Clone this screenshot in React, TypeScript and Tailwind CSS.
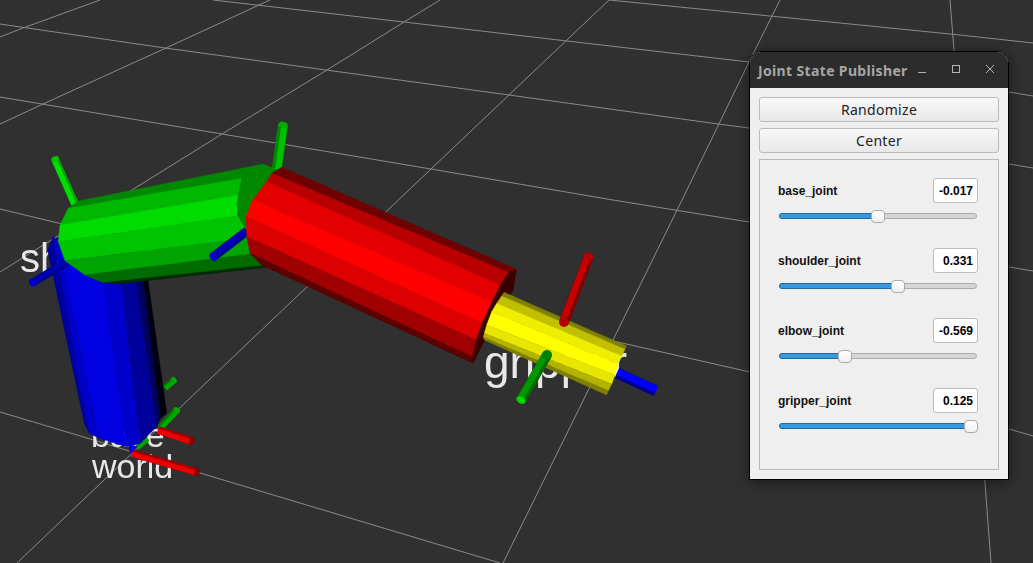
const gridLines = [
  "213,0 404,22 567,41 749,62 1009,92 1033,96",
  "609,0 750,14 960,35 1033,43",
  "0,24 165,48 326,70 509,95 718,124 749,128 1009,164 1033,168",
  "0,97 222,134 431,169 613,200 749,222 1009,267 1033,271",
  "0,209 58,223 260,265 622,343 750,372 1009,429 1033,436",
  "0,412 87,438 200,473 500,563",
  "0,37 23,28 100,0",
  "0,124 43,104 166,48 259,5 270,0",
  "0,272 222,134 327,70 404,22 440,0",
  "609,0 431,169 230,360 17,563",
  "780,0 749,62 682,200 613,340 503,563",
  "950,0 954,50 985,483 991,563",
];

type Pt = [number, number];
type Edge = [number, number, number, number];

const z3 = (x: number, y: number): Pt => [x / 3, y / 3 + 140];
const z4 = (x: number, y: number): Pt => [x / 3 + 30, y / 3 + 330];
const z5 = (x: number, y: number): Pt => [x / 3 + 450, y / 3 + 240];
const z6 = (x: number, y: number): Pt => [x / 3 + 230, y / 3 + 110];
const z12 = (x: number, y: number): Pt => [x / 3 + 40, y / 3 + 270];

const pts = (list: Pt[]) => list.map((p) => `${p[0].toFixed(1)},${p[1].toFixed(1)}`).join(" ");

function Bands({ edges, colors, map }: { edges: Edge[]; colors: string[]; map: (x: number, y: number) => Pt }) {
  return (
    <g>
      {colors.map((c, i) => {
        const a = edges[i];
        const b = edges[i + 1];
        return (
          <polygon
            key={i}
            fill={c}
            stroke={c}
            strokeWidth={0.4}
            points={pts([map(a[0], a[1]), map(a[2], a[3]), map(b[2], b[3]), map(b[0], b[1])])}
          />
        );
      })}
    </g>
  );
}

function Tube({
  from,
  to,
  w,
  dark,
  bright,
  cap,
  side = 1,
  square = false,
}: {
  from: Pt;
  to: Pt;
  w: number;
  dark: string;
  bright: string;
  cap?: string;
  side?: number;
  square?: boolean;
}) {
  const dx = to[0] - from[0];
  const dy = to[1] - from[1];
  const len = Math.hypot(dx, dy);
  const nx = (-dy / len) * side * w * 0.14;
  const ny = (dx / len) * side * w * 0.14;
  return (
    <g>
      <line x1={from[0]} y1={from[1]} x2={to[0]} y2={to[1]} stroke={dark} strokeWidth={w} />
      <line x1={from[0] + nx} y1={from[1] + ny} x2={to[0] + nx} y2={to[1] + ny} stroke={bright} strokeWidth={w * 0.62} />
      {!square && (
        <ellipse
          cx={to[0]}
          cy={to[1]}
          rx={w / 2}
          ry={w / 3}
          fill={cap ?? bright}
          transform={`rotate(${(Math.atan2(dy, dx) * 180) / Math.PI + 90} ${to[0]} ${to[1]})`}
        />
      )}
    </g>
  );
}

function Scene() {
  return (
    <svg className="absolute inset-0" width={1033} height={563} viewBox="0 0 1033 563">
      {gridLines.map((l, i) => (
        <polyline key={i} points={l} fill="none" stroke="#8a8a8a" strokeWidth={1} />
      ))}

      <g fill="#e8e8e8" fontFamily="'Liberation Sans', sans-serif" className="blur-[0.4px]">
        <text x={20} y={272} fontSize={40}>shoulder</text>
        <text x={91} y={447} fontSize={34}>base</text>
        <text x={92} y={478} fontSize={34}>world</text>
        <text x={484} y={378} fontSize={46}>gripper</text>
      </g>

      {/* base frame axes */}
      <Tube from={[165, 388]} to={[174, 380]} w={7} dark="#007a00" bright="#00a800" />
      <Tube from={[160, 428]} to={[177, 410]} w={7} dark="#007a00" bright="#00a800" />
      <Tube from={[137, 448]} to={[147, 440]} w={5} dark="#007a00" bright="#00a800" />
      <Tube from={[158, 430]} to={[192, 441]} w={8} dark="#a00000" bright="#ee0000" cap="#880000" />
      <Tube from={[132, 453]} to={[197, 472]} w={8} dark="#a00000" bright="#ee0000" cap="#880000" />
      <polygon points={pts([z4(295, 340), z4(322, 350), z4(300, 372)])} fill="#0000e0" />

      {/* base link */}
      <polygon points={pts([z3(175, 290), z3(145, 330), z3(150, 360), z3(200, 360)])} fill="#00009c" />
      <Bands
        map={z12}
        edges={[
          [23, -60, 133, 460],
          [39, -100, 148, 490],
          [55, -90, 178, 505],
          [171, -90, 260, 530],
          [230, -90, 300, 520],
          [272, -90, 350, 470],
          [295, -90, 362, 445],
          [307, -90, 380, 430],
        ]}
        colors={["#00009c", "#0000c8", "#0000e0", "#0000cc", "#00009a", "#000060", "#000010"]}
      />
      <Tube from={[67, 262]} to={[32, 283]} w={8} dark="#000090" bright="#0000b4" cap="#0000c8" />

      {/* shoulder axis */}
      <Tube from={[75, 204]} to={[55, 159]} w={8} dark="#00a800" bright="#00e000" cap="#00c800" side={-1} />
      <Tube from={[276, 175]} to={[283, 125]} w={10} dark="#008a00" bright="#00c000" cap="#00a800" side={1} />

      {/* shoulder link */}
      <polygon
        fill="#008800"
        points={pts([z3(725, 115), z3(790, 72), z3(880, 110), z3(820, 380), z3(780, 375), z3(735, 265), z3(718, 235), z3(710, 190)])}
      />
      <Bands
        map={z3}
        edges={[
          [235, 183, 790, 72],
          [205, 205, 725, 115],
          [180, 255, 715, 165],
          [175, 305, 712, 228],
          [195, 362, 800, 288],
          [255, 405, 810, 335],
          [310, 428, 800, 375],
          [360, 431, 800, 382],
        ]}
        colors={["#008800", "#00b800", "#00dc00", "#00c400", "#00a400", "#006c00", "#002c00"]}
      />
      <polygon fill="#008800" points={pts([z3(725, 115), z3(790, 72), z3(880, 110), z3(800, 300), z3(735, 265), z3(718, 235), z3(710, 190)])} />
      <Tube from={[247, 231]} to={[213, 257]} w={9} dark="#000090" bright="#0000b8" cap="#0000d0" />

      {/* elbow link */}
      <polygon
        fill="#3a0000"
        points={pts([z6(860, 478), z6(850, 540), z6(800, 620), z6(760, 700), z6(730, 760), z6(600, 700), z6(760, 480)])}
      />
      <Bands
        map={z6}
        edges={[
          [155, 172, 860, 478],
          [125, 190, 835, 487],
          [110, 215, 810, 525],
          [68, 270, 785, 575],
          [48, 320, 755, 640],
          [50, 380, 738, 690],
          [60, 430, 725, 740],
          [95, 465, 730, 760],
        ]}
        colors={["#700000", "#b80000", "#e40000", "#ff0000", "#dc0000", "#a00000", "#5c0000"]}
      />

      {/* gripper link */}
      <Bands
        map={z5}
        edges={[
          [162, 157, 530, 318],
          [155, 168, 525, 328],
          [140, 190, 515, 348],
          [125, 215, 503, 372],
          [110, 255, 495, 405],
          [103, 280, 485, 432],
          [100, 292, 475, 452],
          [103, 300, 470, 465],
        ]}
        colors={["#808000", "#c0c000", "#eeee00", "#ffff00", "#e6e600", "#b4b400", "#808000"]}
      />
      <Tube from={[564, 322]} to={[589, 256]} w={10} dark="#800000" bright="#c80000" cap="#b80000" side={-1} />
      <circle cx={564} cy={322} r={5} fill="#b00000" />
      <Tube from={[547, 355]} to={[521, 400]} w={10} dark="#006c00" bright="#009800" cap="#00d800" side={1} />
      <circle cx={547} cy={355} r={5} fill="#008000" />
      <Tube from={[617, 373]} to={[656, 391]} w={11} dark="#000090" bright="#0000ff" square side={-1} />
    </svg>
  );
}

const joints = [
  { name: "base_joint", value: "-0.017", pos: 877 },
  { name: "shoulder_joint", value: "0.331", pos: 897 },
  { name: "elbow_joint", value: "-0.569", pos: 844 },
  { name: "gripper_joint", value: "0.125", pos: 970 },
];

function Row({ name, value, pos }: { name: string; value: string; pos: number }) {
  const left = pos - 779;
  return (
    <div className="flex h-[70px] flex-col">
      <div className="flex h-[25px] items-center justify-between">
        <span className="text-[12px] font-bold text-[#111] font-['Liberation_Sans',sans-serif]">{name}</span>
        <span className="flex h-[25px] w-[45px] items-center justify-end rounded-[3px] border border-[#bdbdbd] bg-white pr-[4px] text-[12px] font-bold text-black font-['Liberation_Sans',sans-serif]">
          {value}
        </span>
      </div>
      <div className="relative mt-[10px] ml-[1px] h-[6px] w-[198px] rounded-[3px] border border-[#ababab] bg-[#d6d6d6]">
        <div
          className="absolute left-[-1px] top-[-1px] h-[6px] rounded-[3px] border border-[#1f6a9f] bg-[#3a98dd]"
          style={{ width: left + 2 }}
        />
        <div
          className="absolute top-[-4px] h-[13px] w-[14px] rounded-[4px] border border-[#ababab] bg-gradient-to-b from-white to-[#f0f0f0]"
          style={{ left: left - 7 }}
        />
      </div>
    </div>
  );
}

function PanelButton({ label }: { label: string }) {
  return (
    <button className="flex h-[25px] w-full items-center justify-center rounded-[3px] border border-[#bcbcbc] bg-gradient-to-b from-[#f8f8f8] to-[#e8e8e8] text-[14px] tracking-[0.3px] text-[#222] font-['Noto_Sans',sans-serif]">
      {label}
    </button>
  );
}

function Publisher() {
  return (
    <div className="absolute left-[749px] top-[51px] flex h-[429px] w-[260px] flex-col overflow-hidden rounded-t-[12px] border border-black bg-[#efefef] shadow-[0_2px_14px_rgba(0,0,0,0.45)]">
      <div className="flex h-[36px] shrink-0 items-center bg-[#2c2c2c] pl-[8px] text-[#a6a6a6]">
        <span className="w-[158px] whitespace-nowrap text-[14px] font-bold tracking-[0.35px] font-['Noto_Sans',sans-serif]">
          Joint State Publisher
        </span>
        <svg width={92} height={36} viewBox="0 0 92 36" fill="none" stroke="#b4b4b4" strokeWidth={1} className="shrink-0">
          <path d="M2 20.5h8" />
          <rect x={36.5} y={13.5} width={7} height={7} />
          <path d="M70 13l8 8M78 13l-8 8" />
        </svg>
      </div>
      <div className="flex min-h-0 flex-1 flex-col gap-[6px] pl-[9px] pr-[9px] pt-[9px] pb-[9px]">
        <PanelButton label="Randomize" />
        <PanelButton label="Center" />
        <div className="flex-1 border border-[#b9b9b9] pl-[18px] pr-[20px] pt-[18px]">
          {joints.map((j) => (
            <Row key={j.name} {...j} />
          ))}
        </div>
      </div>
    </div>
  );
}

export default function App() {
  return (
    <div className="relative h-[563px] w-[1033px] overflow-hidden bg-[#303030]">
      <Scene />
      <Publisher />
    </div>
  );
}
